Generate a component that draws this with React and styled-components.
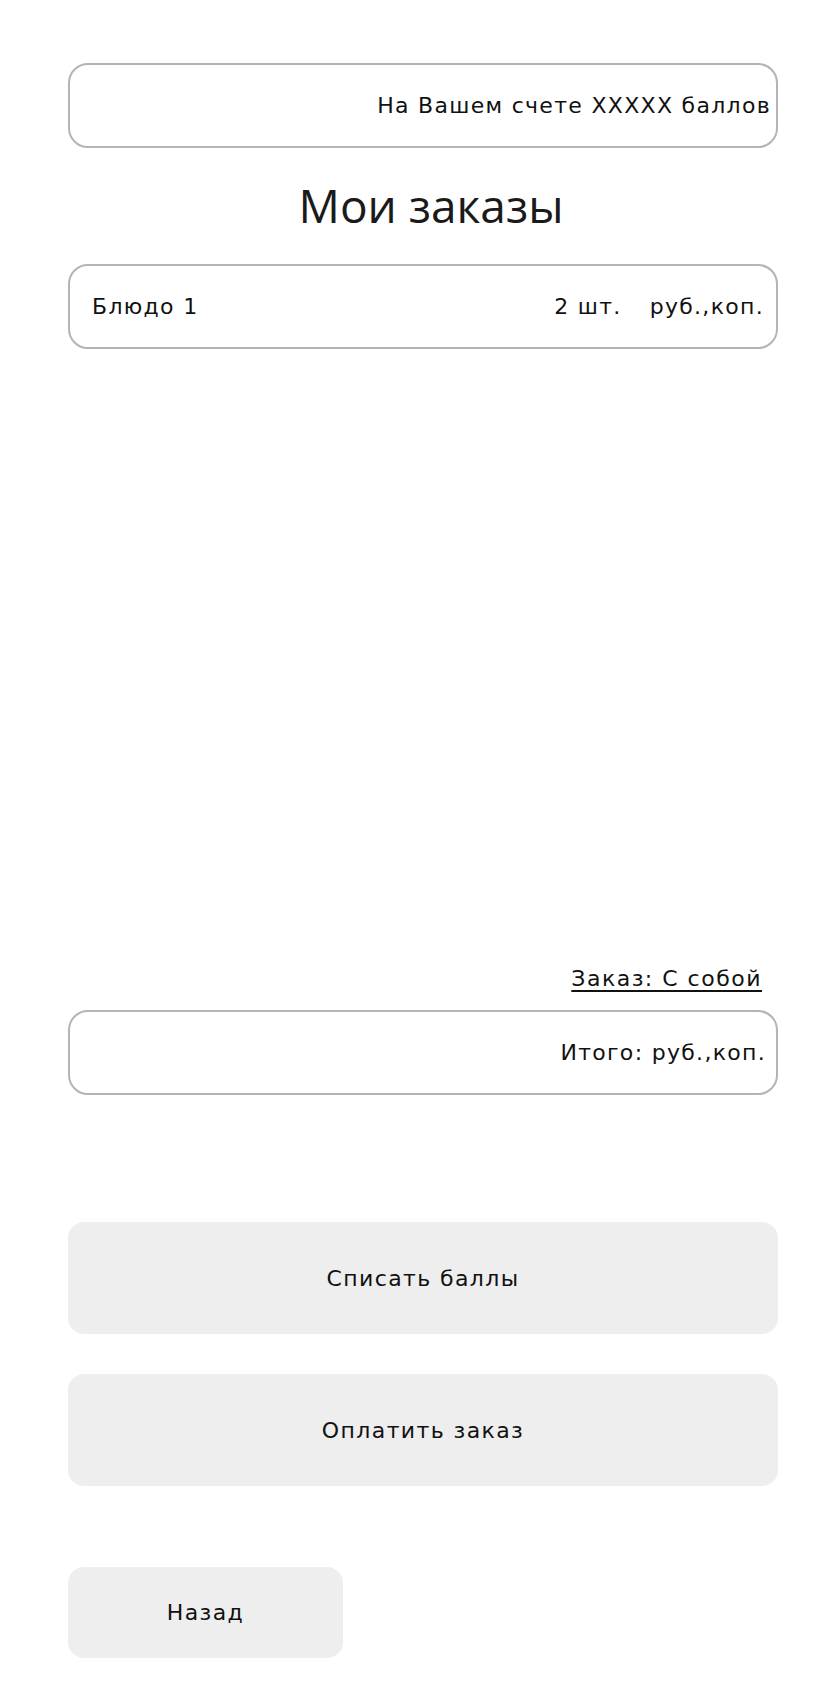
import React from "react";
import styled, { createGlobalStyle } from "styled-components";

const Global = createGlobalStyle`
  html, body { margin: 0; padding: 0; background: #ffffff; }
  body { font-family: "DejaVu Sans", "Open Sans", sans-serif; color: #111; }
`;

const Page = styled.div`
  width: 710px;
  margin-left: 68px;
  padding-top: 63px;
  padding-bottom: 47px;
  display: flex;
  flex-direction: column;
`;

const OutlineBox = styled.div`
  box-sizing: border-box;
  height: 85px;
  border: 2px solid #b4b4b6;
  border-radius: 20px;
  display: flex;
  align-items: center;
  justify-content: ${(p) => p.$justify || "flex-end"};
  padding: 0 ${(p) => p.$pr || 10}px 0 ${(p) => p.$pl || 20}px;
  font-size: 22px;
  letter-spacing: 1.3px;
  color: #111;
  margin-top: ${(p) => p.$mt || 0}px;
`;

const Title = styled.h1`
  margin: 8px 0 10px;
  height: 98px;
  display: flex;
  align-items: center;
  justify-content: center;
  padding-left: 16px;
  font-family: "Open Sans", "Noto Sans", sans-serif;
  font-weight: 400;
  font-size: 46px;
  color: #1a1a1a;
`;

const Qty = styled.span`
  margin-left: auto;
  margin-right: 28px;
`;

const OrderType = styled.div`
  margin-top: 605px;
  height: 48px;
  display: flex;
  align-items: center;
  justify-content: flex-end;
  padding-right: 16px;
  font-size: 22px;
  letter-spacing: 1.5px;
  span {
    text-decoration: underline;
    text-underline-offset: 4px;
  }
`;

const Button = styled.button`
  box-sizing: border-box;
  width: ${(p) => p.$w || "100%"};
  height: ${(p) => p.$h || 112}px;
  margin-top: ${(p) => p.$mt || 0}px;
  border: none;
  border-radius: 16px;
  background: #eeeeee;
  font-family: "DejaVu Sans", "Open Sans", sans-serif;
  font-size: 22px;
  letter-spacing: 1.4px;
  color: #111;
  display: flex;
  align-items: center;
  justify-content: center;
  cursor: pointer;
`;

export default function App() {
  return (
    <>
      <Global />
      <Page>
        <OutlineBox $pr={5}>На Вашем счете XXXXX баллов</OutlineBox>
        <Title>Мои заказы</Title>
        <OutlineBox $pl={22} $pr={12} $mt={0}>
          <span>Блюдо 1</span>
          <Qty>2 шт.</Qty>
          <span>руб.,коп.</span>
        </OutlineBox>
        <OrderType>
          <span>Заказ: С собой</span>
        </OrderType>
        <OutlineBox $pr={10} $mt={8}>Итого: руб.,коп.</OutlineBox>
        <Button $mt={127}>Списать баллы</Button>
        <Button $mt={40}>Оплатить заказ</Button>
        <Button $mt={81} $w="275px" $h={91}>Назад</Button>
      </Page>
    </>
  );
}
